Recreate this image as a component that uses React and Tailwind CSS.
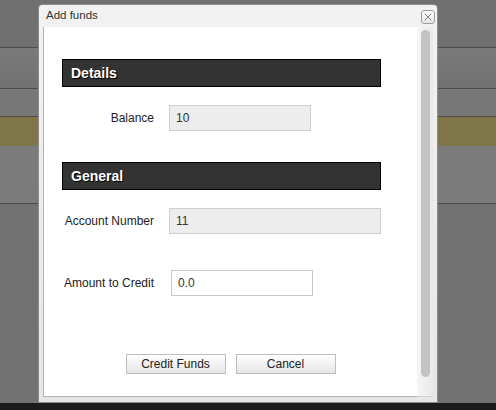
import { X } from 'lucide-react';

const font = { fontFamily: '"Liberation Sans", Arial, sans-serif' };

function SectionHeader({ title }) {
  return (
    <div className="ml-[18px] flex h-[28px] w-[319px] items-center border border-black bg-[#333333] pl-[8px]">
      <span className="text-[14px] font-bold text-white [text-shadow:1px_1px_1px_#000]">{title}</span>
    </div>
  );
}

function Field({ label, value, width, readOnly = true, shift = 0 }) {
  return (
    <div className="ml-[18px] flex items-center">
      <label className="w-[92px] text-right text-[12px] text-[#222]">{label}</label>
      <div
        className={`ml-[15px] flex h-[26px] items-center border pl-[6px] text-[12px] text-[#333] ${
          readOnly ? 'border-[#cfcfcf] bg-[#ededed]' : 'border-[#c8c8c8] bg-white'
        } ${shift ? 'ml-[17px]' : ''}`}
        style={{ width }}
      >
        {value}
      </div>
    </div>
  );
}

function Button({ children }) {
  return (
    <button className="h-[20px] w-[100px] border border-[#bdbdbd] bg-gradient-to-b from-white to-[#e6e6e6] text-[12px] text-[#222]">
      {children}
    </button>
  );
}

export default function App() {
  return (
    <div className="relative h-[410px] w-[496px] overflow-hidden bg-[#727272]" style={font}>
      {/* page behind the overlay */}
      <div className="flex flex-col">
        <div className="h-[47px] bg-[#707070]" />
        <div className="h-px bg-[#4c4c4c]" />
        <div className="h-[40px] bg-gradient-to-b from-[#7a7a7a] to-[#727272]" />
        <div className="h-px bg-[#4c4c4c]" />
        <div className="h-[27px] bg-[#777777]" />
        <div className="h-px bg-[#4c4c4c]" />
        <div className="h-[29px] bg-[#7e7548]" />
        <div className="h-[57px] bg-[#7b7b7b]" />
        <div className="h-px bg-[#4c4c4c]" />
        <div className="h-[199px] bg-[#727272]" />
        <div className="h-[7px] bg-[#1b1b1b]" />
      </div>

      {/* dialog */}
      <div className="absolute left-[38px] top-[4px] flex h-[399px] w-[400px] flex-col rounded-t-[4px] border border-[#8c8c8c] bg-gradient-to-b from-[#f2f2f2] to-[#e6e6e6] px-[4px] pb-[5px]">
        <div className="flex h-[22px] items-center justify-between pl-[3px]">
          <span className="text-[11.5px] text-[#333]">Add funds</span>
          <div className="-mr-[2px] mt-[2px] flex h-[14px] w-[14px] items-center justify-center rounded-[3px] border border-[#9d9d9d] bg-gradient-to-b from-white to-[#e4e4e4]">
            <X size={12} strokeWidth={1.3} className="text-[#444]" />
          </div>
        </div>

        <div className="flex flex-1">
          <div className="flex flex-1 flex-col border-b border-l border-[#b3b3b3] bg-white">
            <div className="h-[32px]" />
            <SectionHeader title="Details" />
            <div className="h-[18px]" />
            <Field label="Balance" value="10" width={142} />
            <div className="h-[31px]" />
            <SectionHeader title="General" />
            <div className="h-[18px]" />
            <Field label="Account Number" value="11" width={212} />
            <div className="h-[36px]" />
            <Field label="Amount to Credit" value="0.0" width={142} readOnly={false} shift />
            <div className="h-[58px]" />
            <div className="flex justify-center gap-[10px]">
              <Button>Credit Funds</Button>
              <Button>Cancel</Button>
            </div>
          </div>
          <div className="flex w-[16px] justify-center border-b border-[#cfcfcf] bg-gradient-to-r from-[#f6f6f6] to-[#e9e9e9] pt-[3px] pb-[19px]">
            <div className="w-[9px] rounded-full bg-[#c3c3c3]" />
          </div>
        </div>
      </div>
    </div>
  );
}
